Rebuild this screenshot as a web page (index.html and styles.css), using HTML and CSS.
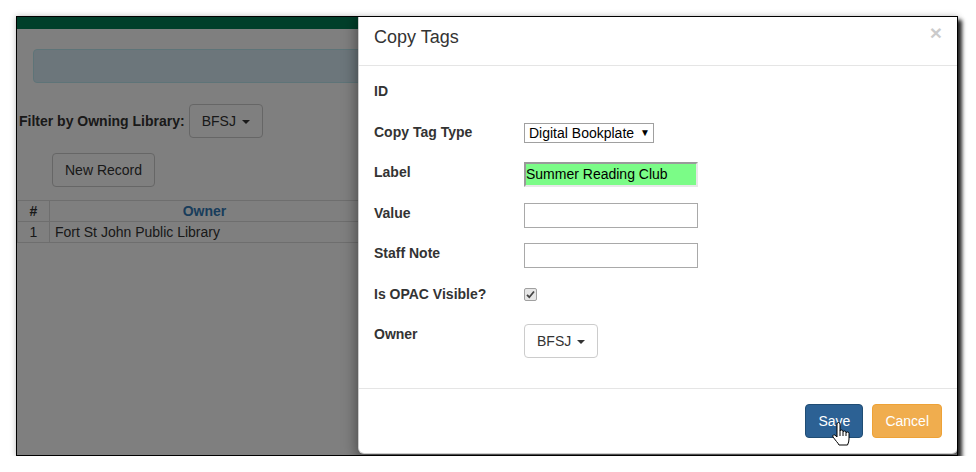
FILE: index.html
```html
<!DOCTYPE html>
<html>
<head>
<meta charset="utf-8">
<title>Copy Tags</title>
<link rel="stylesheet" href="styles.css">
</head>
<body>
<div class="shot">
  <div class="page">
    <div class="navbar"></div>
    <div class="alert"></div>
    <div class="filter">
      <span class="filter-label">Filter by Owning Library:</span>
      <button class="btn">BFSJ <span class="caret"></span></button>
    </div>
    <div class="actions">
      <button class="btn">New Record</button>
    </div>
    <table class="grid">
      <thead>
        <tr><th class="col-num">#</th><th class="col-owner"><span class="link">Owner</span></th><th></th></tr>
      </thead>
      <tbody>
        <tr><td class="col-num">1</td><td>Fort St John Public Library</td><td></td></tr>
      </tbody>
    </table>
  </div>
  <div class="backdrop"></div>
  <div class="modal">
    <div class="modal-header">
      <h4 class="modal-title">Copy Tags</h4>
      <span class="close">×</span>
    </div>
    <div class="modal-body">
      <div class="row"><div class="lbl">ID</div><div class="ctl"></div></div>
      <div class="row"><div class="lbl">Copy Tag Type</div><div class="ctl"><div class="select">Digital Bookplate<span class="tri">▼</span></div></div></div>
      <div class="row"><div class="lbl">Label</div><div class="ctl"><div class="input input-filled">Summer Reading Club</div></div></div>
      <div class="row"><div class="lbl">Value</div><div class="ctl"><div class="input"></div></div></div>
      <div class="row"><div class="lbl">Staff Note</div><div class="ctl"><div class="input"></div></div></div>
      <div class="row"><div class="lbl">Is OPAC Visible?</div><div class="ctl"><div class="check"><svg width="11" height="11" viewBox="0 0 11 11"><path d="M2 5.8 L4.3 8.2 L9 2.5" fill="none" stroke="#444" stroke-width="1.8"/></svg></div></div></div>
      <div class="row"><div class="lbl">Owner</div><div class="ctl"><button class="btn btn-light">BFSJ <span class="caret"></span></button></div></div>
    </div>
    <div class="modal-footer">
      <span class="save-wrap">
        <button class="btn btn-primary">Save</button>
        <svg class="hand" width="18" height="24" viewBox="0 0 18 24"><path d="M5 2 Q5 0.5 6.5 0.5 Q8 0.5 8 2 L8 9 Q8.2 8 9.5 8 Q11 8 11 9.5 L11 10 Q11.3 9 12.5 9 Q14 9 14 10.5 L14 11 Q14.3 10 15.5 10 Q17 10 17 11.5 L17 17 Q17 20 15.5 23 L7 23 Q6 21 4.5 19.5 L1 15 Q0.3 13.5 1.5 13 Q2.7 12.5 4 14 L5 15 Z M8 9 L8 14 M11 10 L11 14 M14 11 L14 14" fill="#fff" stroke="#000" stroke-width="1" stroke-linejoin="round"/></svg>
      </span>
      <button class="btn btn-warning">Cancel</button>
    </div>
  </div>
</div>
</body>
</html>
```
FILE: styles.css
```css
html, body {
  margin: 0;
  padding: 0;
  background: #fff;
}
body {
  font-family: "Liberation Sans", Arial, sans-serif;
  font-size: 14px;
  line-height: 20px;
  color: #333;
}
.shot {
  position: relative;
  overflow: hidden;
  width: 940px;
  height: 438px;
  margin: 16px 0 0 16px;
  border: 1px solid #000;
  box-shadow: 4px 4px 4px rgba(0,0,0,0.85), 0 0 6px rgba(0,0,0,0.25);
  background: #fff;
}
.page {
  height: 100%;
}
.navbar {
  height: 12px;
  background: #007e55;
}
.alert {
  margin: 20px 16px 0 16px;
  height: 34px;
  box-sizing: border-box;
  background: #d9edf7;
  border: 1px solid #bce8f1;
  border-radius: 4px;
}
.filter {
  display: flex;
  align-items: center;
  gap: 4px;
  margin: 21px 0 0 2px;
}
.filter-label {
  font-weight: bold;
}
.actions {
  margin: 15px 0 0 35px;
}
.btn {
  display: inline-block;
  box-sizing: border-box;
  height: 34px;
  padding: 6px 12px;
  font-family: inherit;
  font-size: 14px;
  line-height: 20px;
  color: #333;
  background: #fff;
  border: 1px solid #ccc;
  border-radius: 4px;
  cursor: pointer;
}
.caret {
  display: inline-block;
  width: 0;
  height: 0;
  margin-left: 2px;
  vertical-align: middle;
  border-top: 4px solid;
  border-left: 4px solid transparent;
  border-right: 4px solid transparent;
}
.grid {
  width: 100%;
  margin-top: 13px;
  border-collapse: collapse;
}
.grid th, .grid td {
  border: 1px solid #ddd;
  padding: 0 5px;
  line-height: 20px;
  text-align: left;
}
.grid th {
  font-weight: bold;
  text-align: center;
}
.grid .col-num {
  width: 21px;
  text-align: center;
}
.grid .col-owner {
  width: 299px;
}
.link {
  color: #337ab7;
}
.backdrop {
  position: absolute;
  top: 0;
  left: 0;
  right: 0;
  bottom: 0;
  z-index: 1;
  background-color: #000;
  opacity: 0.5;
}
.modal {
  position: absolute;
  z-index: 2;
  left: 341px;
  top: -9px;
  width: 600px;
  box-sizing: border-box;
  background: #fff;
  border: 1px solid rgba(0,0,0,0.2);
  border-radius: 6px;
  box-shadow: 0 5px 15px rgba(0,0,0,0.5);
}
.modal-header {
  display: flex;
  justify-content: space-between;
  align-items: flex-start;
  padding: 15px;
  border-bottom: 1px solid #e5e5e5;
}
.modal-title {
  margin: 0;
  font-size: 18px;
  font-weight: normal;
  line-height: 26px;
}
.close {
  font-size: 21px;
  font-weight: bold;
  line-height: 21px;
  color: #000;
  opacity: 0.2;
  margin-top: -2px;
}
.modal-body {
  padding: 15px 15px 23px 15px;
}
.row {
  display: flex;
  align-items: flex-start;
  height: 40.5px;
}
.lbl {
  width: 150px;
  flex: none;
  font-weight: bold;
}
.ctl {
  flex: 1;
}
.select {
  display: flex;
  align-items: center;
  box-sizing: border-box;
  width: 130px;
  height: 20px;
  padding: 0 0 0 4px;
  margin-top: 1px;
  border: 1px solid #a0a0a0;
  background: #fff;
  color: #000;
  line-height: 18px;
}
.tri {
  font-size: 10px;
  margin-left: 6px;
}
.input {
  box-sizing: border-box;
  width: 174px;
  height: 25px;
  border: 1px solid #a9a9a9;
  background: #fff;
  line-height: 23px;
  color: #000;
  padding-left: 1px;
}
.input-filled {
  background: #7bfc87;
  border-width: 2px;
  border-style: solid;
  border-color: #9a9a9a #e8e8e8 #e8e8e8 #9a9a9a;
  line-height: 21px;
  padding-left: 0;
}
.check {
  box-sizing: border-box;
  width: 13px;
  height: 13px;
  margin-top: 4px;
  border: 1px solid #a0a0a0;
  border-radius: 2px;
  background: #e6e6e6;
  display: flex;
  align-items: center;
  justify-content: center;
}
.modal-footer {
  display: flex;
  justify-content: flex-end;
  gap: 9px;
  padding: 15px;
  border-top: 1px solid #e5e5e5;
}
.save-wrap {
  position: relative;
  display: inline-block;
}
.btn-primary {
  color: #fff;
  background: #2c6194;
  border-color: #204d74;
}
.btn-warning {
  color: #fff;
  background: #f0ad4e;
  border-color: #eea236;
}
.hand {
  position: absolute;
  left: 27px;
  top: 18px;
}
```
